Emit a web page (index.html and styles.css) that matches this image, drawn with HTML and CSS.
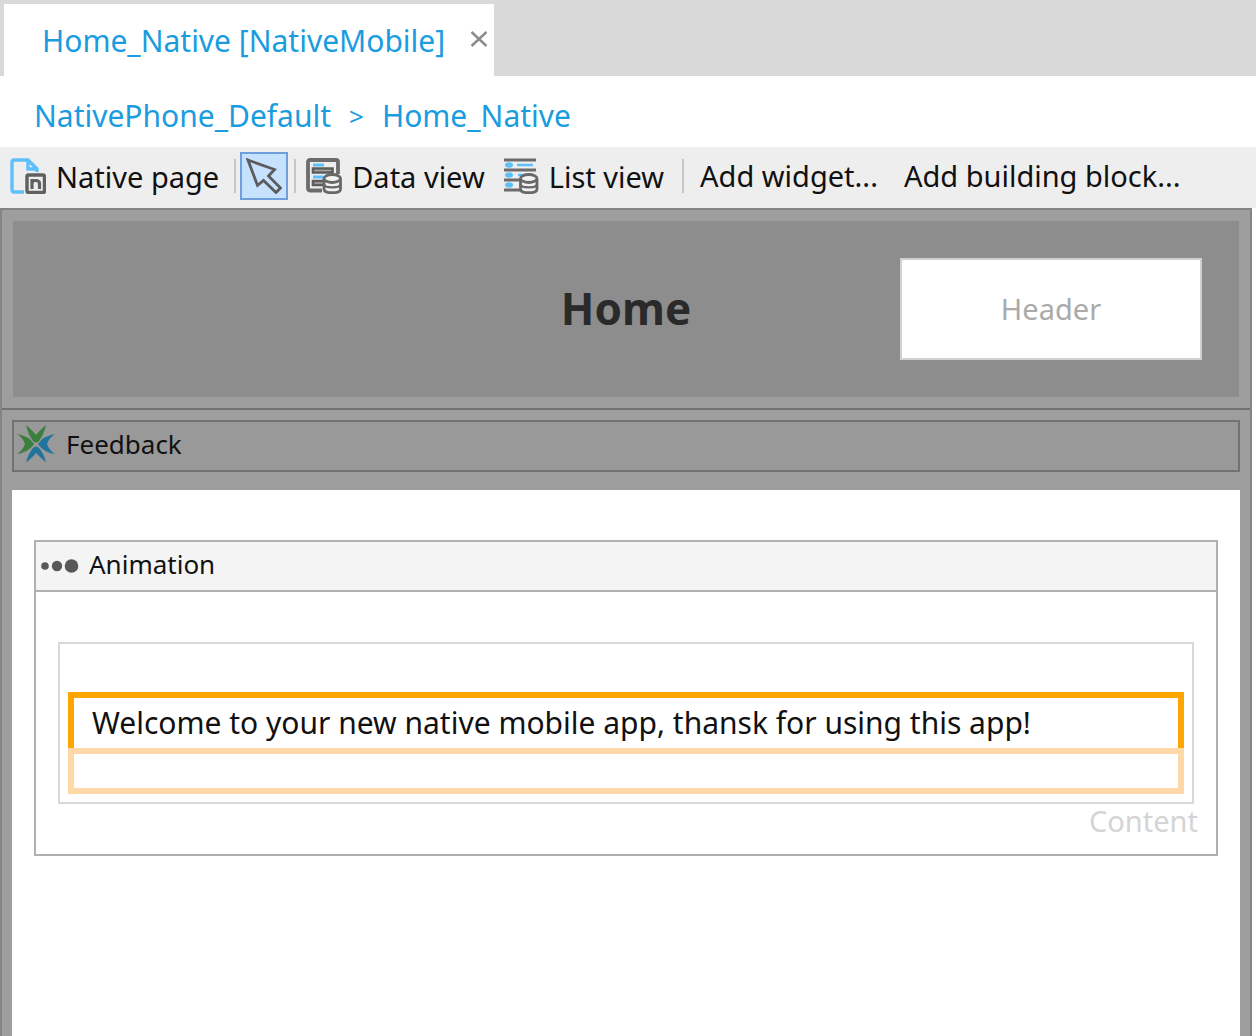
FILE: index.html
```html
<!DOCTYPE html>
<html lang="en">
<head>
<meta charset="utf-8">
<title>Home_Native [NativeMobile]</title>
<meta name="viewport" content="width=device-width, initial-scale=1">
<link rel="stylesheet" href="styles.css">
</head>
<body>
<header class="tabs">
  <div class="tab">
    <a class="tab-label" href="#home">Home_Native [NativeMobile]</a>
    <button class="tab-close" type="button" aria-label="Close">
      <svg width="18" height="18" viewBox="0 0 18 18" fill="none" stroke="#8c8c8c" stroke-width="2.4"><path d="M1.500 1 16.500 15M16.500 1 1.500 15"/></svg>
    </button>
  </div>
</header>
<nav class="crumbs">
  <a href="#layout">NativePhone_Default</a>
  <span class="crumb-sep">&gt;</span>
  <a href="#home">Home_Native</a>
</nav>
<div class="toolbar" role="toolbar">
  <button class="tool tool-page" type="button">
    <svg width="36" height="36" viewBox="0 0 36 36" fill="none">
      <path d="M14 34H4Q2 34 2 32V4Q2 2 4 2H18L27 11V14M18 2V11H27" stroke="#5cc0fa" stroke-width="3.400"/>
      <rect x="17" y="17" width="17.500" height="17.500" rx="1.500" fill="#eee" stroke="#606060" stroke-width="3.400"/>
      <path d="M22 31V21M22 25Q22 22.500 25.500 22.500Q29.500 22.500 29.500 25.500V31" stroke="#606060" stroke-width="3.200"/>
    </svg>
    <span>Native page</span>
  </button>
  <span class="divider divider-page"></span>
  <button class="tool-select" type="button" aria-label="Select" aria-pressed="true">
    <svg width="36" height="36" viewBox="0 0 36 36" fill="none" stroke="#5c5c5c" stroke-width="2.800"><path d="M2 2 28.500 11.500 22.500 18 34.500 30 30 34.500 17.500 22.500 11.500 27.500Z"/></svg>
  </button>
  <span class="divider"></span>
  <button class="tool tool-data" type="button">
    <svg width="36" height="36" viewBox="0 0 36 36" fill="none">
      <path d="M16 32.500H4Q2 32.500 2 30.500V4Q2 2 4 2H30Q32 2 32 4V16" stroke="#6c6c6c" stroke-width="3.800"/>
      <path d="M7 7H18M7 19H17" stroke="#5cc0fa" stroke-width="2.800"/>
      <path d="M7 10.500H26.500V14.500H7ZM17 23H7V27H17" fill="#a8a8a8" stroke="#5c5c5c" stroke-width="2.600"/>
      <path d="M18 21V31C18 36 34.500 36 34.500 31V21" fill="#f2f2f2" stroke="#686868" stroke-width="2.800"/>
      <path d="M18 26C18 30.500 34.500 30.500 34.500 26" stroke="#686868" stroke-width="2.400"/>
      <ellipse cx="26.250" cy="20.500" rx="8.250" ry="4" fill="#f2f2f2" stroke="#686868" stroke-width="2.800"/>
    </svg>
    <span>Data view</span>
  </button>
  <button class="tool tool-list" type="button">
    <svg width="36" height="36" viewBox="0 0 36 36" fill="none">
      <path d="M1 2H33M1 12H33M1 22H17M1 32H17" stroke="#6c6c6c" stroke-width="3.200"/>
      <path d="M14 7H30M15 17H20" stroke="#5cc0fa" stroke-width="2.400"/>
      <g fill="#5cc0fa"><ellipse cx="6" cy="7" rx="4" ry="2.800"/><ellipse cx="6" cy="17" rx="4" ry="2.800"/><ellipse cx="6" cy="27" rx="4" ry="2.800"/></g>
      <path d="M17.500 21V31C17.500 36 34 36 34 31V21" fill="#f2f2f2" stroke="#686868" stroke-width="2.800"/>
      <path d="M17.500 26C17.500 30.500 34 30.500 34 26" stroke="#686868" stroke-width="2.400"/>
      <ellipse cx="25.750" cy="20.500" rx="8.250" ry="4" fill="#f2f2f2" stroke="#686868" stroke-width="2.800"/>
    </svg>
    <span>List view</span>
  </button>
  <span class="divider divider-add"></span>
  <button class="tool" type="button">Add widget...</button>
  <button class="tool tool-block" type="button">Add building block...</button>
</div>
<main class="canvas">
  <section class="head-area">
    <div class="head-panel">
      <h1 class="title">Home</h1>
      <div class="head-slot">Header</div>
    </div>
  </section>
  <section class="body-area">
    <div class="feedback">
      <svg width="40" height="40" viewBox="0 0 40 40" fill="none">
        <path fill="#3a7f3e" d="M10 1Q17 7 20 11Q24 6 30 1Q28 10 23 17Q20 20 17 17Q12 10 10 1ZM1 10Q13 12 18 20Q13 28 1 30Q7 26 9 20Q7 14 1 10Z"/>
        <path fill="#1f739d" d="M39 10Q27 12 22 20Q27 28 39 30Q33 26 31 20Q33 14 39 10ZM10 38.500Q17 33 20 29Q24 33 30 38.500Q28 30 23 24Q20 21 17 24Q12 30 10 38.500Z"/>
      </svg>
      <span>Feedback</span>
    </div>
    <div class="page">
      <div class="widget">
        <div class="widget-head">
          <svg width="38" height="16" viewBox="0 0 38 16" fill="#585858"><circle cx="4" cy="8" r="3.800"/><circle cx="16" cy="8" r="5.200"/><circle cx="30.500" cy="8" r="6.800"/></svg>
          <span class="widget-name">Animation</span>
        </div>
        <div class="widget-body">
          <div class="dropzone">
            <p class="text-selected">Welcome to your new native mobile app, thansk for using this app!</p>
            <div class="text-next"></div>
          </div>
          <div class="slot-name">Content</div>
        </div>
      </div>
    </div>
  </section>
</main>
</body>
</html>
```
FILE: styles.css
```css
* { box-sizing: border-box; }

body {
  margin: 0;
  min-height: 100vh;
  display: flex;
  flex-direction: column;
  background: #fff;
  color: #111;
  font-family: "Noto Sans", "Open Sans", sans-serif;
  font-size: 29px;
  line-height: 40px;
  white-space: nowrap;
}

button {
  margin: 0;
  padding: 0;
  border: 0;
  background: none;
  color: inherit;
  font: inherit;
}

a { color: #1a9cdf; text-decoration: none; }
svg { display: block; flex: none; }

.tabs {
  display: flex;
  padding: 4px 0 0 4px;
  background: #d9d9d9;
}

.tab {
  display: flex;
  align-items: center;
  gap: 25px;
  height: 72px;
  padding: 2px 6px 0 38px;
  background: #fff;
  font-size: 30px;
}

.tab-close { padding-bottom: 2px; }

.crumbs {
  display: flex;
  align-items: center;
  gap: 18px;
  height: 71px;
  padding: 8px 34px 0;
  font-size: 30px;
}

.crumb-sep { color: #1a9cdf; font-size: 26px; }

.toolbar {
  display: flex;
  align-items: center;
  height: 61px;
  padding: 0 10px 3px;
  background: #eee;
}

.tool { display: flex; align-items: center; gap: 10px; line-height: 42px; }
.tool span { padding-top: 2px; }
.tool-data { margin-left: 10px; }
.tool-list { margin-left: 18px; }
.tool-block { margin-left: 26px; }

.divider {
  width: 2px;
  height: 34px;
  background: #c6c6c6;
}

.divider-page { margin-left: 15px; }
.divider-add { margin: 0 16px 0 18px; }

.tool-select {
  margin: 0 6px 0 4px;
  padding: 4px;
  border: 2px solid #6f9fdc;
  background: #c7e2ff;
}

.canvas {
  display: flex;
  flex: 1;
  flex-direction: column;
  margin-right: 4px;
  border: 2px solid #848484;
  border-bottom: 0;
  background: #9e9e9e;
}

.head-area {
  padding: 11px;
  border-bottom: 2px solid #727272;
}

.head-panel {
  display: grid;
  grid-template-columns: 1fr auto 1fr;
  align-items: center;
  height: 176px;
  padding-right: 37px;
  padding-left: 37px;
  background: #8d8d8d;
}

.title {
  grid-column: 2;
  margin: 0;
  padding-bottom: 2px;
  color: #2a2a2a;
  font-size: 44px;
  line-height: 60px;
}

.head-slot {
  justify-self: end;
  width: 302px;
  padding: 29px 0;
  border: 2px solid #d0d0d0;
  background: #fff;
  color: #aaa;
  text-align: center;
}

.body-area {
  display: flex;
  flex: 1;
  flex-direction: column;
  gap: 18px;
  padding: 10px 10px 0;
}

.feedback {
  display: flex;
  align-items: center;
  gap: 10px;
  height: 52px;
  padding: 0 2px 4px;
  border: 2px solid #727272;
  background: #999;
  font-size: 26px;
}

.page {
  flex: 1;
  padding: 50px 22px;
  background: #fff;
}

.widget { border: 2px solid #b0b0b0; }

.widget-head {
  display: flex;
  align-items: center;
  gap: 10px;
  height: 50px;
  padding: 0 5px;
  border-bottom: 2px solid #b0b0b0;
  background: #f4f4f4;
  font-size: 26px;
}

.widget-name { padding-bottom: 4px; }

.widget-body { padding: 50px 22px 12px; }

.dropzone {
  padding: 48px 8px 8px;
  border: 2px solid #d8d8d8;
}

.text-selected {
  height: 56px;
  margin: 0;
  padding: 5px 18px 0;
  border: 6px solid #ffa500;
  border-bottom: 0;
  font-size: 30px;
}

.text-next {
  height: 46px;
  border: 6px solid #ffd8a8;
}

.slot-name {
  height: 38px;
  margin-right: -4px;
  color: #d4d4d4;
  line-height: 34px;
  text-align: right;
}
```
